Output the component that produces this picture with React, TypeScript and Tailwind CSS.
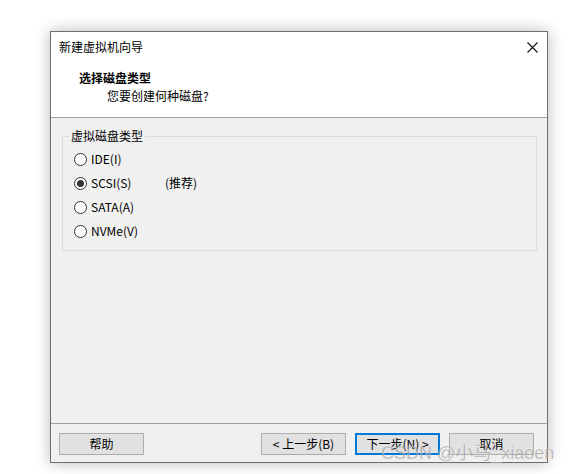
import React from "react";

const font = { fontFamily: '"Microsoft YaHei", "Noto Sans CJK SC", "Noto Sans", sans-serif' };

function Radio({ checked }: { checked?: boolean }) {
  return (
    <span className="w-[13px] h-[13px] rounded-full border border-[#333333] bg-white flex items-center justify-center shrink-0">
      {checked && <span className="w-[7px] h-[7px] rounded-full bg-[#333333]" />}
    </span>
  );
}

function Btn({ children, primary }: { children: React.ReactNode; primary?: boolean }) {
  return (
    <div
      className={
        "h-[22px] w-[85px] flex items-center justify-center text-[12px] text-black bg-[#e1e1e1] " +
        (primary ? "border-2 border-[#0078d7]" : "border border-[#adadad]")
      }
    >
      {children}
    </div>
  );
}

export default function App() {
  const options = [
    { label: "IDE(I)", checked: false },
    { label: "SCSI(S)", checked: true, note: "(推荐)" },
    { label: "SATA(A)", checked: false },
    { label: "NVMe(V)", checked: false },
  ];
  return (
    <div className="w-[571px] h-[474px] bg-white relative overflow-hidden" style={font}>
      <div className="pt-[31px] pl-[50px]">
        <div className="w-[498px] h-[432px] border border-[#6e6e6e] bg-[#f0f0f0] flex flex-col shadow-[0_0_14px_rgba(0,0,0,0.28)]">
          {/* header */}
          <div className="h-[86px] bg-white border-b border-[#a0a0a0] relative shrink-0">
            <div className="absolute left-[8px] top-[7px] text-[12px] text-black leading-[16px]">新建虚拟机向导</div>
            <svg className="absolute right-[9px] top-[10px]" width="11" height="11" viewBox="0 0 11 11">
              <path d="M0.5 0.5 L10.5 10.5 M10.5 0.5 L0.5 10.5" stroke="#111" strokeWidth="1.1" />
            </svg>
            <div className="absolute left-[28px] top-[38px] text-[12px] font-bold text-black leading-[16px]">选择磁盘类型</div>
            <div className="absolute left-[56px] top-[56px] text-[12px] text-black leading-[16px]">您要创建何种磁盘?</div>
          </div>
          {/* content */}
          <div className="flex-1 border-b border-[#a0a0a0] pt-[18px] pl-[11px] pr-[10px]">
            <div className="relative border border-[#dcdcdc] h-[115px] pt-[10px] pl-[11px]">
              <div className="absolute left-[6px] top-[-9px] px-[2px] bg-[#f0f0f0] text-[12px] text-black leading-[16px]">虚拟磁盘类型</div>
              <div className="flex flex-col">
                {options.map((o) => (
                  <div key={o.label} className="h-[24px] flex items-center gap-[4px] text-[12px] text-black">
                    <Radio checked={o.checked} />
                    <span className="w-[70px]">{o.label}</span>
                    {o.note && <span>{o.note}</span>}
                  </div>
                ))}
              </div>
            </div>
          </div>
          {/* buttons */}
          <div className="h-[38px] shrink-0 flex items-start pt-[9px] pl-[8px] pr-[13px]">
            <Btn>帮助</Btn>
            <div className="flex-1" />
            <div className="flex gap-[9px]">
              <Btn>&lt; 上一步(B)</Btn>
              <Btn primary>下一步(N) &gt;</Btn>
              <Btn>取消</Btn>
            </div>
          </div>
        </div>
      </div>
      <div
        className="absolute left-[381px] top-[443px] text-[18px] leading-[20px] text-[rgba(150,150,150,0.7)]"
        style={{ fontFamily: '"Liberation Sans", "Noto Sans CJK SC", sans-serif', WebkitTextStroke: "0.3px rgba(255,255,255,0.6)" }}
      >
        CSDN @小马_xiaoen
      </div>
    </div>
  );
}
